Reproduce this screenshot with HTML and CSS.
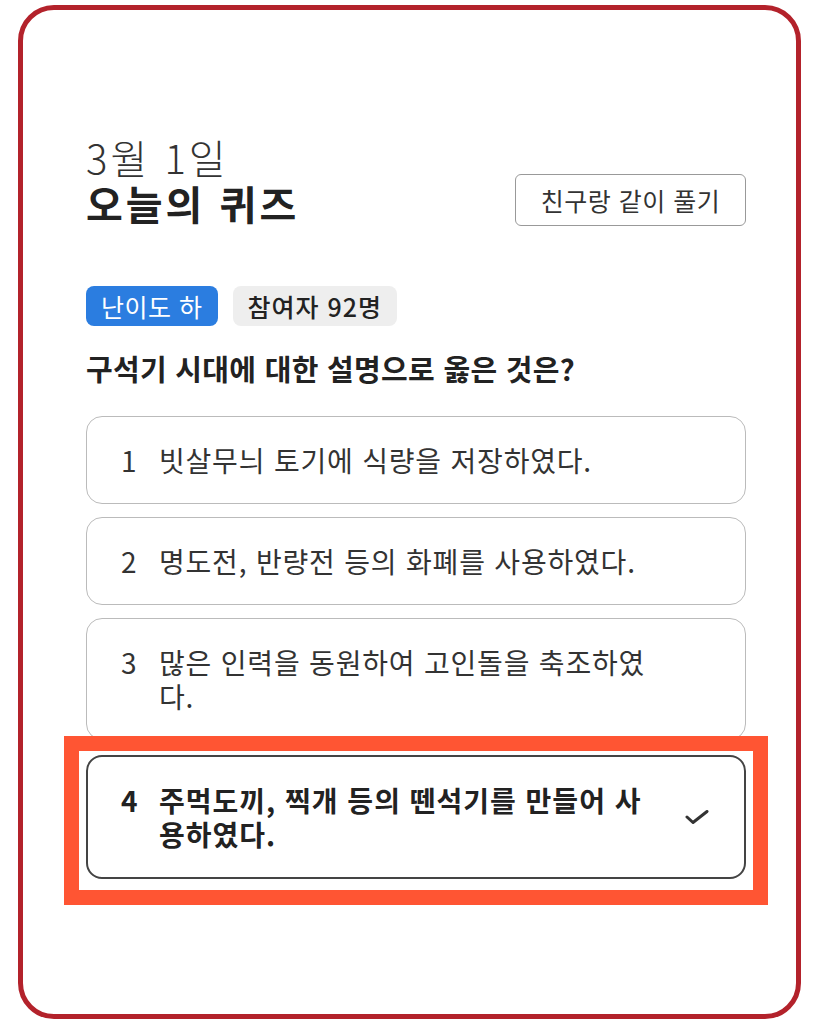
FILE: index.html
```html
<!DOCTYPE html>
<html lang="ko">
  <head>
    <meta charset="UTF-8" />
    <meta name="viewport" content="width=device-width, initial-scale=1.0" />
    <title>오늘의 퀴즈</title>
    <link rel="stylesheet" href="styles.css">
  </head>
  <body>
    <div class="card">
      <div class="header">
        <h1 class="title">
          <span class="date">3월 1일</span>
          <span class="name">오늘의 퀴즈</span>
        </h1>
        <button class="share">친구랑 같이 풀기</button>
      </div>
      <div class="tags">
        <span class="tag level">난이도 하</span>
        <span class="tag count">참여자 92명</span>
      </div>
      <p class="question">구석기 시대에 대한 설명으로 옳은 것은?</p>
      <ul class="options">
        <li class="option">
          <div class="body">
            <span class="num">1</span>
            <span class="text">빗살무늬 토기에 식량을 저장하였다.</span>
          </div>
          <span class="check"></span>
        </li>
        <li class="option">
          <div class="body">
            <span class="num">2</span>
            <span class="text">명도전, 반량전 등의 화폐를 사용하였다.</span>
          </div>
          <span class="check"></span>
        </li>
        <li class="option">
          <div class="body">
            <span class="num">3</span>
            <span class="text">많은 인력을 동원하여 고인돌을 축조하였다.</span>
          </div>
          <span class="check"></span>
        </li>
        <li class="option selected">
          <div class="body">
            <span class="num">4</span>
            <span class="text">주먹도끼, 찍개 등의 뗀석기를 만들어 사용하였다.</span>
          </div>
          <span class="check">
            <svg width="24" height="14" viewBox="0 0 24 14">
              <path d="M2 7 L8 12.5 L22 1.5" fill="none" stroke="#333" stroke-width="3" stroke-linecap="round" stroke-linejoin="round" />
            </svg>
          </span>
          <span class="mark"></span>
        </li>
      </ul>
    </div>
  </body>
</html>
```

FILE: styles.css
```css
html {
  height: 100%;
}
body {
  margin: 0;
  background-color: #fff;
  font-family: "Noto Sans CJK KR", "Noto Sans", sans-serif;
  color: #222;
}
.card {
  box-sizing: border-box;
  margin: 5px 18px 0 18px;
  height: 1014px;
  border: 5px solid #b3222b;
  border-radius: 36px;
  padding: 124px 50px 0 63px;
}
.header {
  display: flex;
  justify-content: space-between;
  align-items: flex-end;
}
.title {
  margin: 0;
  display: flex;
  flex-direction: column;
  line-height: 46px;
  font-size: 40px;
  letter-spacing: 3px;
}
.date {
  font-weight: 300;
  color: #333;
}
.name {
  font-weight: 700;
  color: #222;
}
.share {
  font-family: inherit;
  font-size: 25px;
  letter-spacing: 0.5px;
  color: #333;
  background: #fff;
  border: 1.5px solid #999;
  border-radius: 6px;
  height: 52px;
  width: 231px;
  padding: 0;
  margin-bottom: 0;
  cursor: pointer;
}
.tags {
  display: flex;
  gap: 15px;
  margin-top: 60px;
}
.tag {
  height: 40px;
  line-height: 40px;
  padding: 0 15px;
  border-radius: 8px;
  font-size: 25px;
  letter-spacing: 0.5px;
}
.level {
  background-color: #2b7de0;
  color: #fff;
}
.count {
  background-color: #eeeeee;
  color: #222;
  font-weight: 500;
  letter-spacing: 1px;
}
.question {
  margin: 22px 0 0 0;
  font-size: 29px;
  line-height: 40px;
  letter-spacing: 0.3px;
  font-weight: 700;
  color: #222;
}
.options {
  list-style: none;
  margin: 28px 0 0 0;
  padding: 0;
  display: flex;
  flex-direction: column;
  gap: 13px;
}
.option {
  position: relative;
  display: flex;
  align-items: center;
  box-sizing: border-box;
  padding: 26px 36px 26px 34px;
  min-height: 88px;
  border: 1px solid #bbb;
  border-radius: 16px;
  font-size: 28px;
  line-height: 34px;
  letter-spacing: 0.8px;
  color: #333;
}
.body {
  flex: 1;
  display: flex;
  align-items: flex-start;
}
.num {
  width: 38px;
  flex-shrink: 0;
}
.text {
  flex: 1;
}
.check {
  width: 24px;
  margin-left: 30px;
  display: flex;
}
.option.selected {
  margin-top: 2px;
  border: 2px solid #444;
  padding: 26px 35px 26px 33px;
  font-weight: 700;
  letter-spacing: 1px;
  color: #222;
}
.mark {
  position: absolute;
  top: -21px;
  left: -24px;
  right: -24px;
  bottom: -28px;
  border: 15px solid #ff5533;
  pointer-events: none;
}
```
